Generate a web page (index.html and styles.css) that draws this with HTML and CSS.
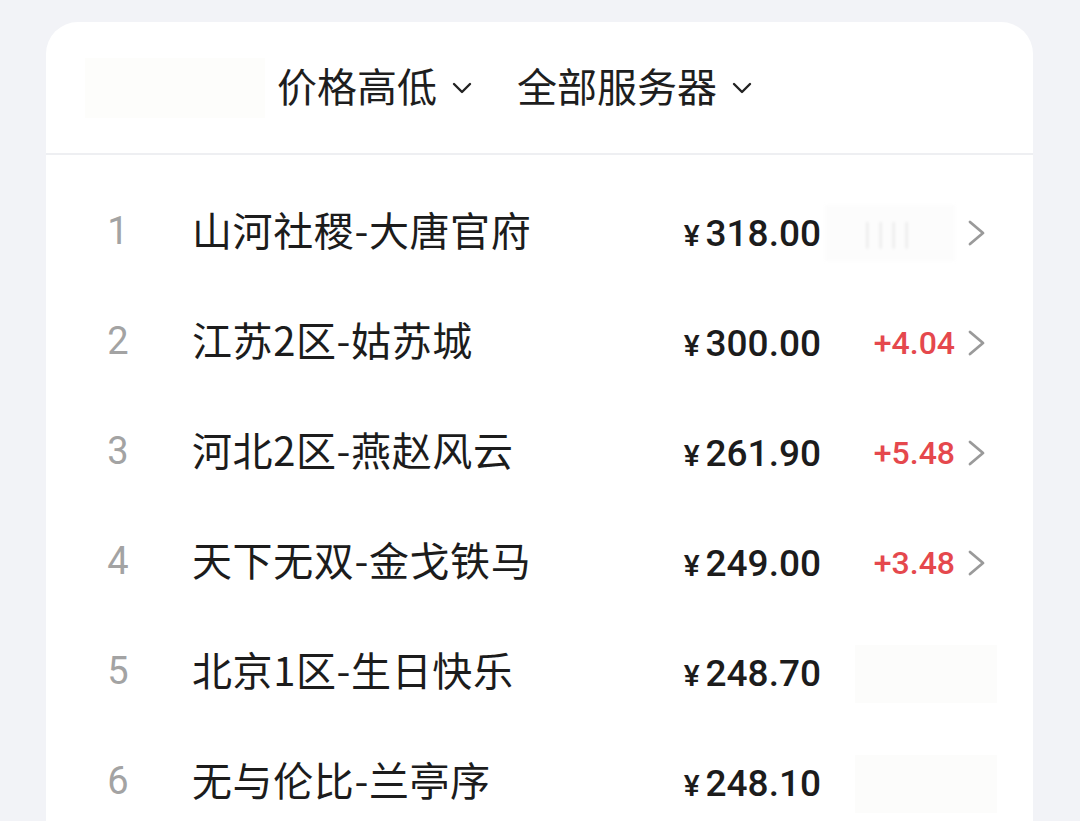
FILE: index.html
```html
<!DOCTYPE html>
<html lang="zh-CN">
<head>
<meta charset="utf-8">
<link rel="stylesheet" href="styles.css">
</head>
<body>
<div class="card">
  <div class="header">
    <div class="ghost"></div>
    <div class="filter">价格高低<svg class="caret" width="22" height="14" viewBox="0 0 22 14"><path d="M3 3 L11 11 L19 3" fill="none" stroke="#222" stroke-width="2.4" stroke-linecap="round" stroke-linejoin="round"/></svg></div>
    <div class="filter">全部服务器<svg class="caret" width="22" height="14" viewBox="0 0 22 14"><path d="M3 3 L11 11 L19 3" fill="none" stroke="#222" stroke-width="2.4" stroke-linecap="round" stroke-linejoin="round"/></svg></div>
  </div>
  <div class="list">
    <div class="row">
      <div class="num">1</div>
      <div class="name">山河社稷-大唐官府</div>
      <div class="price"><span class="yen">¥</span>318.00</div>
      <div class="change"><span class="blurred">||||</span></div>
      <svg class="arrow" width="20" height="28" viewBox="0 0 20 28"><path d="M3 3 L16 14 L3 25" fill="none" stroke="#9a9a9a" stroke-width="2.8" stroke-linecap="round" stroke-linejoin="round"/></svg>
    </div>
    <div class="row">
      <div class="num">2</div>
      <div class="name">江苏2区-姑苏城</div>
      <div class="price"><span class="yen">¥</span>300.00</div>
      <div class="change up">+4.04</div>
      <svg class="arrow" width="20" height="28" viewBox="0 0 20 28"><path d="M3 3 L16 14 L3 25" fill="none" stroke="#9a9a9a" stroke-width="2.8" stroke-linecap="round" stroke-linejoin="round"/></svg>
    </div>
    <div class="row">
      <div class="num">3</div>
      <div class="name">河北2区-燕赵风云</div>
      <div class="price"><span class="yen">¥</span>261.90</div>
      <div class="change up">+5.48</div>
      <svg class="arrow" width="20" height="28" viewBox="0 0 20 28"><path d="M3 3 L16 14 L3 25" fill="none" stroke="#9a9a9a" stroke-width="2.8" stroke-linecap="round" stroke-linejoin="round"/></svg>
    </div>
    <div class="row">
      <div class="num">4</div>
      <div class="name">天下无双-金戈铁马</div>
      <div class="price"><span class="yen">¥</span>249.00</div>
      <div class="change up">+3.48</div>
      <svg class="arrow" width="20" height="28" viewBox="0 0 20 28"><path d="M3 3 L16 14 L3 25" fill="none" stroke="#9a9a9a" stroke-width="2.8" stroke-linecap="round" stroke-linejoin="round"/></svg>
    </div>
    <div class="row">
      <div class="num">5</div>
      <div class="name">北京1区-生日快乐</div>
      <div class="price"><span class="yen">¥</span>248.70</div>
      <div class="change"><span class="faint"></span></div>
      <div class="arrow-space"></div>
    </div>
    <div class="row">
      <div class="num">6</div>
      <div class="name">无与伦比-兰亭序</div>
      <div class="price"><span class="yen">¥</span>248.10</div>
      <div class="change"><span class="faint"></span></div>
      <div class="arrow-space"></div>
    </div>
  </div>
</div>
</body>
</html>
```
FILE: styles.css
```css
html, body {
  margin: 0;
  padding: 0;
}
body {
  background: #f2f3f7;
  font-family: "Noto Sans CJK SC", "Noto Sans", sans-serif;
  color: #1c1c1c;
  overflow: hidden;
  height: 821px;
}
.card {
  margin: 22px 0 0 46px;
  width: 987px;
  height: 900px;
  background: #fff;
  border-radius: 32px 32px 0 0;
}
.header {
  height: 131px;
  border-bottom: 2px solid #eeeff2;
  display: flex;
  align-items: center;
  padding-left: 39px;
}
.ghost {
  width: 180px;
  height: 60px;
  background: #fdfdfb;
  margin-right: 12px;
}
.filter {
  display: flex;
  align-items: center;
  font-size: 40px;
  line-height: 1;
  color: #1e1e1e;
  margin-right: 44px;
  padding-bottom: 6px;
}
.caret {
  margin-left: 14px;
  margin-top: 6px;
}
.list {
  padding-top: 23px;
}
.row {
  height: 110px;
  display: flex;
  align-items: center;
  padding-left: 46px;
  padding-right: 46px;
}
.num {
  width: 52px;
  text-align: center;
  font-family: Roboto, "Liberation Sans", sans-serif;
  font-size: 38px;
  font-weight: 400;
  color: #a3a3a3;
  margin-right: 48px;
  padding-bottom: 4px;
}
.name {
  flex: 1;
  font-size: 40px;
  line-height: 1;
  color: #1c1c1c;
  letter-spacing: 0.6px;
  padding-bottom: 8px;
}
.price {
  font-family: Roboto, "Liberation Sans", sans-serif;
  font-size: 37px;
  font-weight: 500;
  color: #1c1c1c;
  text-align: right;
  display: flex;
  align-items: baseline;
}
.yen {
  font-size: 30px;
  margin-right: 6px;
}
.change {
  width: 134px;
  text-align: right;
  font-family: Roboto, "Liberation Sans", sans-serif;
  font-size: 32px;
  font-weight: 500;
  height: 56px;
  line-height: 56px;
}
.change.up {
  color: #e5484d;
}
.blurred {
  display: inline-block;
  width: 130px;
  height: 56px;
  background: #fcfcfc;
  color: #e4e4e4;
  text-align: center;
  letter-spacing: 6px;
  font-weight: 300;
  filter: blur(1.5px);
}
.faint {
  display: inline-block;
  width: 142px;
  height: 58px;
  background: #fcfcfb;
  margin-right: -42px;
}
.arrow {
  margin-left: 12px;
  display: block;
}
.arrow-space {
  width: 20px;
  margin-left: 12px;
}
```
